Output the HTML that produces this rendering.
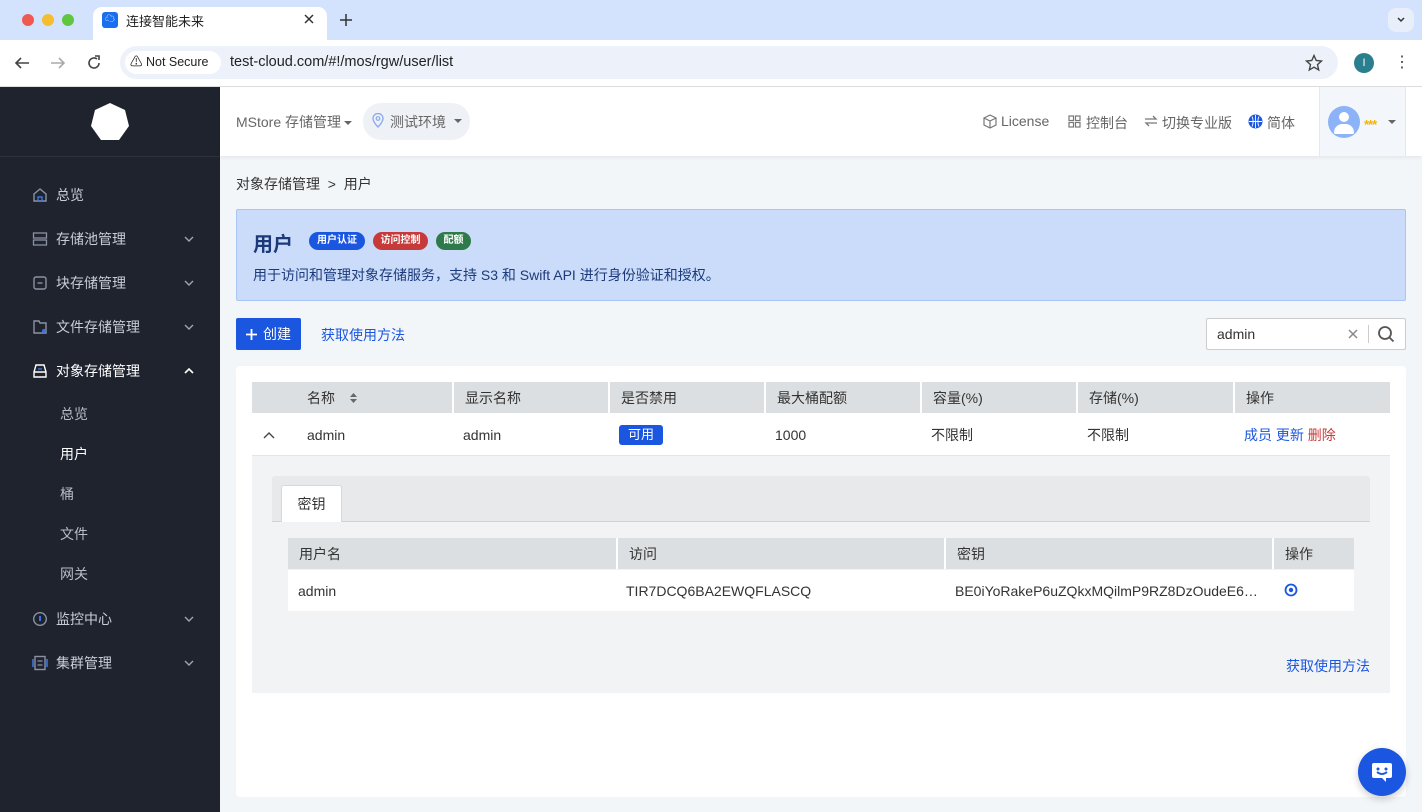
<!DOCTYPE html>
<html><head><meta charset="utf-8"><style>
*{box-sizing:border-box;margin:0;padding:0}
body{width:1422px;height:812px;overflow:hidden;font-family:"Liberation Sans","Noto Sans CJK SC",sans-serif;font-size:14px;color:#333;background:#f3f6f9;position:relative}
.a{position:absolute}
.side{left:0;top:87px;width:220px;height:725px;background:#1f232e}
.mi{position:absolute;left:32px;height:20px;color:#c8ccd4;font-size:14px;display:flex;align-items:center;width:162px}
.mi svg.ic{width:16px;height:16px;margin-right:8px;flex:none}
.mi svg.ch{position:absolute;right:0;top:6px}
.sub{position:absolute;left:60px;color:#b8bcc4;font-size:14px}
.th{background:#dcdfe1;height:31px}
.cell{position:absolute;top:0;height:100%;display:flex;align-items:center;padding-left:11px;border-left:2px solid #fff}
.rc{position:absolute;top:0;height:100%;display:flex;align-items:center}
</style></head><body>
<!-- browser chrome -->
<div class="a" style="left:0;top:0;width:1422px;height:40px;background:#d3e3fd"></div>
<div class="a" style="left:22px;top:14px;width:12px;height:12px;border-radius:50%;background:#ee5a52"></div>
<div class="a" style="left:42px;top:14px;width:12px;height:12px;border-radius:50%;background:#f5bd2f"></div>
<div class="a" style="left:62px;top:14px;width:12px;height:12px;border-radius:50%;background:#5ec73f"></div>
<div class="a" style="left:93px;top:7px;width:234px;height:34px;background:#fff;border-radius:9px 9px 0 0"></div>
<div class="a" style="left:102px;top:12px;width:16px;height:16px;background:#1a6ff0;border-radius:3px;color:#fff;font-size:10px;text-align:center;line-height:16px">☁</div>
<div class="a" style="left:126px;top:11px;font-size:13px;color:#222">连接智能未来</div>
<svg class="a" style="left:304px;top:14px" width="10" height="10"><path d="M1 1L9 9M9 1L1 9" stroke="#333" stroke-width="1.5"/></svg>
<svg class="a" style="left:339px;top:13px" width="14" height="14"><path d="M7 1V13M1 7H13" stroke="#333" stroke-width="1.5"/></svg>
<div class="a" style="left:1388px;top:8px;width:26px;height:24px;border-radius:8px;background:#e8eefa"></div>
<svg class="a" style="left:1396px;top:16px" width="10" height="8"><path d="M2 2L5 5L8 2" stroke="#333" stroke-width="1.5" fill="none"/></svg>
<div class="a" style="left:0;top:40px;width:1422px;height:47px;background:#fff;border-bottom:1px solid #ddd"></div>
<svg class="a" style="left:14px;top:55px" width="16" height="16"><path d="M15 8H2M7 3L2 8L7 13" stroke="#444" stroke-width="1.6" fill="none"/></svg>
<svg class="a" style="left:50px;top:55px" width="16" height="16"><path d="M1 8H14M9 3L14 8L9 13" stroke="#aaa" stroke-width="1.6" fill="none"/></svg>
<svg class="a" style="left:86px;top:55px" width="16" height="16"><path d="M13 8A5 5 0 1 1 11 4" stroke="#444" stroke-width="1.6" fill="none"/><path d="M9 1H13V5" stroke="#444" stroke-width="1.6" fill="none"/></svg>
<div class="a" style="left:120px;top:46px;width:1218px;height:33px;border-radius:17px;background:#edf2fa"></div>
<div class="a" style="left:125px;top:51px;width:96px;height:23px;border-radius:12px;background:#fff;font-size:12.5px;line-height:23px;padding-left:5px;color:#222">⚠ Not Secure</div>
<div class="a" style="left:230px;top:54px;font-size:14.5px;color:#222">test-cloud.com/#!/mos/rgw/user/list</div>
<svg class="a" style="left:1305px;top:54px" width="18" height="18" viewBox="0 0 18 18"><path d="M9 1.5L11.2 6.5L16.5 7L12.5 10.6L13.7 16L9 13.2L4.3 16L5.5 10.6L1.5 7L6.8 6.5Z" fill="none" stroke="#444" stroke-width="1.4"/></svg>
<div class="a" style="left:1354px;top:53px;width:20px;height:20px;border-radius:50%;background:#2a7f8f;color:#fff;font-size:11px;text-align:center;line-height:20px">I</div>
<div class="a" style="left:1394px;top:52px;font-size:16px;color:#444">⋮</div>
<!-- sidebar -->
<div class="a side"></div>
<svg class="a" style="left:90px;top:102px" width="40" height="40" viewBox="0 0 40 40"><polygon points="20,1 35,8 39,24 29,38 11,38 1,24 5,8" fill="#fff"/></svg>
<div class="a" style="left:0;top:156px;width:220px;height:1px;background:#2c313c"></div>
<div class="mi" style="top:185px"><svg class="ic" viewBox="0 0 16 16"><path d="M2 7L8 2L14 7V14H2Z" fill="none" stroke="#8a92a4" stroke-width="1.4"/><path d="M6 14V10H10V14" fill="none" stroke="#3b74e0" stroke-width="1.4"/></svg>总览</div>
<div class="mi" style="top:229px"><svg class="ic" viewBox="0 0 16 16"><rect x="1.5" y="2" width="13" height="5" fill="none" stroke="#8a92a4" stroke-width="1.3"/><rect x="1.5" y="9" width="13" height="5" fill="none" stroke="#8a92a4" stroke-width="1.3"/></svg>存储池管理<svg class="ch" width="10" height="8"><path d="M1 2L5 6L9 2" stroke="#a0a5b0" stroke-width="1.4" fill="none"/></svg></div>
<div class="mi" style="top:273px"><svg class="ic" viewBox="0 0 16 16"><rect x="2" y="2" width="12" height="12" rx="2" fill="none" stroke="#8a92a4" stroke-width="1.4"/><path d="M5.5 8H10.5" stroke="#8a92a4" stroke-width="1.4"/></svg>块存储管理<svg class="ch" width="10" height="8"><path d="M1 2L5 6L9 2" stroke="#a0a5b0" stroke-width="1.4" fill="none"/></svg></div>
<div class="mi" style="top:317px"><svg class="ic" viewBox="0 0 16 16"><path d="M2 2H7L8 4H14V14H2Z" fill="none" stroke="#8a92a4" stroke-width="1.4"/><circle cx="12" cy="12" r="2" fill="#3b74e0"/></svg>文件存储管理<svg class="ch" width="10" height="8"><path d="M1 2L5 6L9 2" stroke="#a0a5b0" stroke-width="1.4" fill="none"/></svg></div>
<div class="mi" style="top:361px;color:#fff"><svg class="ic" viewBox="0 0 16 16"><path d="M2 9L4 2H12L14 9V14H2Z M2 9H14" fill="none" stroke="#fff" stroke-width="1.4"/><path d="M6 6H10" stroke="#3b74e0" stroke-width="1.4"/></svg>对象存储管理<svg class="ch" width="10" height="8"><path d="M1 6L5 2L9 6" stroke="#fff" stroke-width="1.6" fill="none"/></svg></div>
<div class="sub" style="top:404px">总览</div>
<div class="sub" style="top:444px;color:#fff">用户</div>
<div class="sub" style="top:484px">桶</div>
<div class="sub" style="top:524px">文件</div>
<div class="sub" style="top:564px">网关</div>
<div class="mi" style="top:609px"><svg class="ic" viewBox="0 0 16 16"><circle cx="8" cy="8" r="6.3" fill="none" stroke="#8a92a4" stroke-width="1.4"/><path d="M8 5V10" stroke="#3b74e0" stroke-width="2"/></svg>监控中心<svg class="ch" width="10" height="8"><path d="M1 2L5 6L9 2" stroke="#a0a5b0" stroke-width="1.4" fill="none"/></svg></div>
<div class="mi" style="top:653px"><svg class="ic" viewBox="0 0 16 16"><rect x="3" y="1.5" width="10" height="13" fill="none" stroke="#8a92a4" stroke-width="1.4"/><path d="M1 4V12M15 4V12" stroke="#3b74e0" stroke-width="1.6"/><path d="M5.5 6H10.5M5.5 10H10.5" stroke="#8a92a4" stroke-width="1.2"/></svg>集群管理<svg class="ch" width="10" height="8"><path d="M1 2L5 6L9 2" stroke="#a0a5b0" stroke-width="1.4" fill="none"/></svg></div>
<!-- header -->
<div class="a" style="left:220px;top:87px;width:1202px;height:69px;background:#fff;box-shadow:0 2px 4px rgba(0,0,0,.06)"></div>
<div class="a" style="left:236px;top:112px;font-size:14px;color:#666">MStore 存储管理<svg width="10" height="8" style="margin-left:2px"><path d="M1 2H9L5 6Z" fill="#666"/></svg></div>
<div class="a" style="left:363px;top:103px;width:107px;height:37px;border-radius:18px;background:#eef1f6"></div>
<svg class="a" style="left:372px;top:113px" width="12" height="15" viewBox="0 0 12 15"><path d="M6 14C6 14 1 9 1 5.5A5 5 0 0 1 11 5.5C11 9 6 14 6 14Z" fill="none" stroke="#8aa8ea" stroke-width="1.3"/><circle cx="6" cy="5.5" r="1.8" fill="none" stroke="#8aa8ea" stroke-width="1.2"/></svg>
<div class="a" style="left:390px;top:112px;font-size:14px;color:#666">测试环境</div>
<svg class="a" style="left:453px;top:117px" width="10" height="8"><path d="M1 2H9L5 6Z" fill="#666"/></svg>
<svg class="a" style="left:983px;top:114px" width="14" height="15" viewBox="0 0 14 15"><path d="M7 1L13 4V11L7 14L1 11V4Z M1 4L7 7L13 4 M7 7V14" fill="none" stroke="#777" stroke-width="1.2"/></svg>
<div class="a" style="left:1001px;top:113px;font-size:14px;color:#666">License</div>
<svg class="a" style="left:1068px;top:115px" width="13" height="13"><rect x="1" y="1" width="4.5" height="4.5" fill="none" stroke="#777" stroke-width="1.2"/><rect x="7.5" y="1" width="4.5" height="4.5" fill="none" stroke="#777" stroke-width="1.2"/><rect x="1" y="7.5" width="4.5" height="4.5" fill="none" stroke="#777" stroke-width="1.2"/><rect x="7.5" y="7.5" width="4.5" height="4.5" fill="none" stroke="#777" stroke-width="1.2"/></svg>
<div class="a" style="left:1086px;top:113px;font-size:14px;color:#666">控制台</div>
<svg class="a" style="left:1144px;top:115px" width="14" height="12"><path d="M1 4H12L9 1M13 8H2L5 11" fill="none" stroke="#777" stroke-width="1.3"/></svg>
<div class="a" style="left:1162px;top:113px;font-size:14px;color:#666">切换专业版</div>
<svg class="a" style="left:1248px;top:114px" width="15" height="15" viewBox="0 0 15 15"><circle cx="7.5" cy="7.5" r="7" fill="#1a56e0"/><path d="M1 7.5H14M7.5 1V14M4 2.5C5.5 5 5.5 10 4 12.5M11 2.5C9.5 5 9.5 10 11 12.5" stroke="#fff" stroke-width="0.9" fill="none"/></svg>
<div class="a" style="left:1267px;top:113px;font-size:14px;color:#666">简体</div>
<div class="a" style="left:1319px;top:87px;width:87px;height:69px;background:#f3f6fa;border-left:1px solid #e5e8ec;border-right:1px solid #e5e8ec"></div>
<div class="a" style="left:1328px;top:106px;width:32px;height:32px;border-radius:50%;background:#8cb2f8;overflow:hidden"><div class="a" style="left:11px;top:6px;width:10px;height:10px;border-radius:50%;background:#fff"></div><div class="a" style="left:6px;top:18px;width:20px;height:10px;border-radius:10px 10px 2px 2px;background:#fff"></div></div>
<div class="a" style="left:1364px;top:117px;font-size:13px;font-weight:bold;color:#f5b400;letter-spacing:-1px">***</div>
<svg class="a" style="left:1387px;top:118px" width="10" height="8"><path d="M1 2H9L5 6Z" fill="#666"/></svg>
<!-- main -->
<div class="a" style="left:236px;top:174px;font-size:14px;color:#333">对象存储管理 &nbsp;&gt;&nbsp; 用户</div>
<div class="a" style="left:236px;top:209px;width:1170px;height:92px;background:#cadcfa;border:1px solid #a9c5f3;border-radius:2px"></div>
<div class="a" style="left:253px;top:228px;font-size:20px;font-weight:bold;color:#1c3a7a">用户</div>
<div class="a" style="left:309px;top:232px;width:56px;height:18px;border-radius:9px;background:#1a56e0;color:#fff;font-size:10px;font-weight:bold;text-align:center;line-height:18px">用户认证</div>
<div class="a" style="left:373px;top:232px;width:55px;height:18px;border-radius:9px;background:#c73a3a;color:#fff;font-size:10px;font-weight:bold;text-align:center;line-height:18px">访问控制</div>
<div class="a" style="left:436px;top:232px;width:35px;height:18px;border-radius:9px;background:#2f7a4a;color:#fff;font-size:10px;font-weight:bold;text-align:center;line-height:18px">配额</div>
<div class="a" style="left:253px;top:265px;font-size:14px;color:#1c3a7a">用于访问和管理对象存储服务，支持 S3 和 Swift API 进行身份验证和授权。</div>
<div class="a" style="left:236px;top:318px;width:65px;height:32px;background:#1a56e0;border-radius:2px;color:#fff;font-size:14px;display:flex;align-items:center;justify-content:center"><svg width="11" height="11" style="margin-right:6px"><path d="M5.5 0V11M0 5.5H11" stroke="#fff" stroke-width="1.8"/></svg>创建</div>
<div class="a" style="left:321px;top:325px;font-size:14px;color:#1a56e0">获取使用方法</div>
<div class="a" style="left:1206px;top:318px;width:200px;height:32px;background:#fff;border:1px solid #ccc;border-radius:2px"></div>
<div class="a" style="left:1217px;top:326px;font-size:14px;color:#333">admin</div>
<svg class="a" style="left:1348px;top:329px" width="10" height="10"><path d="M1 1L9 9M9 1L1 9" stroke="#888" stroke-width="1.5"/></svg>
<div class="a" style="left:1368px;top:325px;width:1px;height:18px;background:#ccc"></div>
<svg class="a" style="left:1377px;top:325px" width="18" height="18" viewBox="0 0 18 18"><circle cx="8" cy="8" r="6" fill="none" stroke="#555" stroke-width="1.8"/><line x1="12.5" y1="12.5" x2="16.5" y2="16.5" stroke="#555" stroke-width="1.8"/></svg>
<div class="a" style="left:236px;top:366px;width:1170px;height:431px;background:#fff;border-radius:4px"></div>
<div class="a th" style="left:252px;top:382px;width:1138px">
<div class="cell" style="left:0;width:200px;border:0;padding-left:55px">名称<svg width="9" height="12" style="margin-left:14px"><path d="M1 5L4.5 1L8 5ZM1 7L4.5 11L8 7Z" fill="#666"/></svg></div>
<div class="cell" style="left:200px;width:156px">显示名称</div>
<div class="cell" style="left:356px;width:156px">是否禁用</div>
<div class="cell" style="left:512px;width:156px">最大桶配额</div>
<div class="cell" style="left:668px;width:156px">容量(%)</div>
<div class="cell" style="left:824px;width:157px">存储(%)</div>
<div class="cell" style="left:981px;width:157px">操作</div>
</div>
<div class="a" style="left:252px;top:414px;width:1138px;height:42px;border-bottom:1px solid #e3e5e8">
<div class="rc" style="left:11px"><svg width="12" height="8"><path d="M1 7L6 2L11 7" stroke="#444" stroke-width="1.4" fill="none"/></svg></div>
<div class="rc" style="left:55px">admin</div>
<div class="rc" style="left:211px">admin</div>
<div class="rc" style="left:367px"><span style="width:44px;height:20px;background:#1a56e0;color:#fff;border-radius:3px;text-align:center;line-height:20px;font-size:13px">可用</span></div>
<div class="rc" style="left:523px">1000</div>
<div class="rc" style="left:679px">不限制</div>
<div class="rc" style="left:835px">不限制</div>
<div class="rc" style="left:992px;color:#1a56e0">成员&nbsp;更新&nbsp;<span style="color:#c73a3a">删除</span></div>
</div>
<div class="a" style="left:252px;top:456px;width:1138px;height:237px;background:#f2f3f5"></div>
<div class="a" style="left:272px;top:476px;width:1098px;height:46px;background:#e8e9eb;border-bottom:1px solid #cfd2d6;border-radius:3px 3px 0 0"></div>
<div class="a" style="left:281px;top:485px;width:61px;height:37px;background:#fff;border:1px solid #d6d8dc;border-bottom:0;border-radius:3px 3px 0 0;text-align:center;line-height:36px">密钥</div>
<div class="a th" style="left:288px;top:538px;width:1066px">
<div class="cell" style="left:0;width:328px;border:0">用户名</div>
<div class="cell" style="left:328px;width:328px">访问</div>
<div class="cell" style="left:656px;width:328px">密钥</div>
<div class="cell" style="left:984px;width:82px">操作</div>
</div>
<div class="a" style="left:288px;top:570px;width:1066px;height:41px;background:#fff">
<div class="rc" style="left:10px">admin</div>
<div class="rc" style="left:338px">TIR7DCQ6BA2EWQFLASCQ</div>
<div class="rc" style="left:667px">BE0iYoRakeP6uZQkxMQilmP9RZ8DzOudeE6…</div>
<div class="rc" style="left:996px;top:-1px"><svg width="14" height="14"><circle cx="7" cy="7" r="5.5" fill="none" stroke="#1a56e0" stroke-width="1.8"/><circle cx="7" cy="7" r="2.2" fill="#1a56e0"/></svg></div>
</div>
<div class="a" style="left:1286px;top:656px;color:#1a56e0">获取使用方法</div>
<div class="a" style="left:1358px;top:748px;width:48px;height:48px;border-radius:50%;background:#1a56e0;box-shadow:0 3px 8px rgba(0,0,0,.2)">
<svg class="a" style="left:13px;top:13px" width="22" height="22" viewBox="0 0 22 22"><path d="M3 2H19A2 2 0 0 1 21 4V15A2 2 0 0 1 19 17H15V21L11 17H3A2 2 0 0 1 1 15V4A2 2 0 0 1 3 2Z" fill="#fff"/><circle cx="7" cy="8" r="1.5" fill="#1a56e0"/><circle cx="15" cy="8" r="1.5" fill="#1a56e0"/><path d="M6 11Q11 15 16 11" stroke="#1a56e0" stroke-width="1.8" fill="none"/></svg>
</div>
</body></html>
